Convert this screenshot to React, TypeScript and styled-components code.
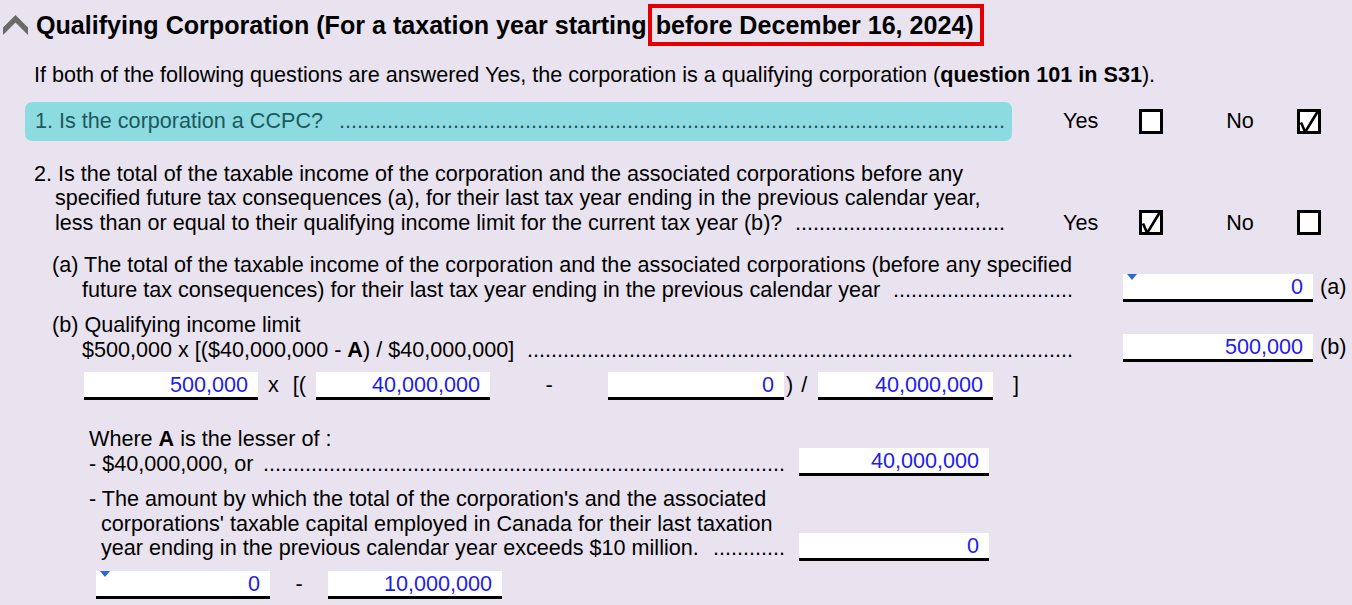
import React from 'react'
import styled, { createGlobalStyle } from 'styled-components'

const GlobalStyle = createGlobalStyle`
	html, body {
		margin: 0;
		padding: 0;
		background: #e9e3ef;
	}
	body {
		font-family: "Liberation Sans", Arial, sans-serif;
		font-size: 21.6px;
		color: #000;
	}
`

const Page = styled.div`
	width: 1352px;
	height: 605px;
	overflow: hidden;
	background: #e9e3ef;
	display: flex;
	flex-direction: column;
`

const TitleRow = styled.div`
	display: flex;
	align-items: center;
	height: 42px;
	margin-top: 4px;
	padding-left: 3px;
	font-size: 25.1px;
	font-weight: bold;
	white-space: nowrap;
`

const TitleText = styled.span`
	margin-left: 8px;
`

const RedBox = styled.span`
	border: 4px solid #e40000;
	padding: 0 6px 0 4px;
	margin-left: 1px;
	line-height: 34px;
`

const Intro = styled.div`
	margin-top: 17px;
	padding-left: 34px;
	line-height: 24.5px;
	white-space: nowrap;
`

const QuestionRow = styled.div<{ $top: number; $align: string }>`
	display: flex;
	align-items: ${p => p.$align};
	margin-top: ${p => p.$top}px;
`

const TealBox = styled.div`
	margin-left: 25px;
	width: 987px;
	height: 39px;
	box-sizing: border-box;
	padding: 0 7px 0 10px;
	background: #8bdbe0;
	border-radius: 7px;
	display: flex;
	align-items: center;
	color: #1b5a5e;
	flex: none;
`

const TextCol = styled.div<{ $w: number; $pl: number; $pr?: number }>`
	width: ${p => p.$w}px;
	padding-left: ${p => p.$pl}px;
	padding-right: ${p => p.$pr ?? 0}px;
	box-sizing: border-box;
	line-height: 24.5px;
	flex: none;
`

const Line = styled.div<{ $indent?: number }>`
	display: flex;
	width: 100%;
	box-sizing: border-box;
	white-space: nowrap;
	padding-left: ${p => p.$indent ?? 0}px;
`

const LeaderBox = styled.span<{ $gap: number }>`
	flex: 1;
	min-width: 0;
	white-space: nowrap;
	text-align: right;
	margin-left: ${p => p.$gap}px;
`

const AnswerGroup = styled.div`
	display: flex;
	align-items: center;
	height: 24.5px;
	margin-left: 51px;
	flex: none;
`

const AnswerLabel = styled.span<{ $mr: number; $ml?: number }>`
	margin-right: ${p => p.$mr}px;
	margin-left: ${p => p.$ml ?? 0}px;
`

const Box = styled.span`
	position: relative;
	display: block;
	width: 24px;
	height: 25px;
	box-sizing: border-box;
	border: 3px solid #000;
	background: #fff;
`

const Mark = styled.svg`
	position: absolute;
	left: -3px;
	top: -3px;
`

const SubRow = styled.div<{ $top: number; $pl?: number }>`
	display: flex;
	align-items: flex-end;
	margin-top: ${p => p.$top}px;
	padding-left: ${p => p.$pl ?? 0}px;
	white-space: nowrap;
`

const Field = styled.div<{ $w: number; $ml?: number }>`
	position: relative;
	width: ${p => p.$w}px;
	margin-left: ${p => p.$ml ?? 0}px;
	height: 28px;
	box-sizing: border-box;
	background: #fff;
	border-bottom: 3px solid #000;
	color: #1c1cf0;
	text-align: right;
	padding-right: 10px;
	line-height: 25px;
	flex: none;
`

const Marker = styled.span`
	position: absolute;
	left: 4px;
	top: 0;
	width: 0;
	height: 0;
	border-left: 5px solid transparent;
	border-right: 5px solid transparent;
	border-top: 6px solid #2a66e0;
`

const FieldLabel = styled.span`
	margin-left: 7px;
	height: 28px;
	line-height: 25px;
`

const Op = styled.span<{ $w: number; $pl?: number; $gap?: number; $center?: boolean }>`
	width: ${p => p.$w}px;
	padding-left: ${p => p.$pl ?? 0}px;
	box-sizing: border-box;
	height: 28px;
	line-height: 25px;
	display: flex;
	gap: ${p => p.$gap ?? 0}px;
	justify-content: ${p => (p.$center ? 'center' : 'flex-start')};
	flex: none;
`

const Leader = ({ count, gap }: { count: number; gap: number }) => (
	<LeaderBox $gap={gap}>{'.'.repeat(count)}</LeaderBox>
)

const Chevron = () => (
	<svg width="25" height="20" viewBox="0 0 25 20">
		<polygon points="0,12.5 12.5,0 25,12.5 25,20 12.5,7.5 0,20" fill="#6b6b6b" />
	</svg>
)

const CheckBox = ({ checked }: { checked?: boolean }) => (
	<Box>
		{checked && (
			<Mark width="24" height="25" viewBox="0 0 24 25">
				<path
					d="M4 13.5 L8.2 23 L21 2"
					fill="none"
					stroke="#000"
					strokeWidth="2.6"
					strokeLinejoin="miter"
				/>
			</Mark>
		)}
	</Box>
)

const Answers = ({ yes }: { yes: boolean }) => (
	<AnswerGroup>
		<AnswerLabel $mr={41}>Yes</AnswerLabel>
		<CheckBox checked={yes} />
		<AnswerLabel $ml={63} $mr={43}>
			No
		</AnswerLabel>
		<CheckBox checked={!yes} />
	</AnswerGroup>
)

export default function App() {
	return (
		<Page>
			<GlobalStyle />
			<TitleRow>
				<Chevron />
				<TitleText>Qualifying Corporation (For a taxation year starting</TitleText>
				<RedBox>before December 16, 2024)</RedBox>
			</TitleRow>

			<Intro>
				If both of the following questions are answered Yes, the corporation is a
				qualifying corporation (<b>question 101 in S31</b>).
			</Intro>

			<QuestionRow $top={14} $align="center">
				<TealBox>
					<Line>
						<span>1. Is the corporation a CCPC?</span>
						<Leader count={111} gap={10} />
					</Line>
				</TealBox>
				<Answers yes={false} />
			</QuestionRow>

			<QuestionRow $top={21} $align="flex-end">
				<TextCol $w={1012} $pl={34} $pr={7}>
					<Line>
						2. Is the total of the taxable income of the corporation and the associated
						corporations before any
					</Line>
					<Line $indent={21}>
						specified future tax consequences (a), for their last tax year ending in the
						previous calendar year,
					</Line>
					<Line $indent={21}>
						<span>
							less than or equal to their qualifying income limit for the current tax year
							(b)?
						</span>
						<Leader count={35} gap={6} />
					</Line>
				</TextCol>
				<Answers yes />
			</QuestionRow>

			<SubRow $top={18}>
				<TextCol $w={1073} $pl={52}>
					<Line>
						(a) The total of the taxable income of the corporation and the associated
						corporations (before any specified
					</Line>
					<Line $indent={30}>
						<span>
							future tax consequences) for their last tax year ending in the previous
							calendar year
						</span>
						<Leader count={30} gap={7} />
					</Line>
				</TextCol>
				<Field $w={190} $ml={50}>
					<Marker />0
				</Field>
				<FieldLabel>(a)</FieldLabel>
			</SubRow>

			<SubRow $top={11}>
				<TextCol $w={1073} $pl={52}>
					<Line>(b) Qualifying income limit</Line>
					<Line $indent={30}>
						<span>
							$500,000 x [($40,000,000 - <b>A</b>) / $40,000,000]
						</span>
						<Leader count={91} gap={7} />
					</Line>
				</TextCol>
				<Field $w={190} $ml={50}>
					500,000
				</Field>
				<FieldLabel>(b)</FieldLabel>
			</SubRow>

			<SubRow $top={10} $pl={84}>
				<Field $w={174}>500,000</Field>
				<Op $w={58} $pl={10} $gap={14}>
					<span>x</span>
					<span>[(</span>
				</Op>
				<Field $w={174}>40,000,000</Field>
				<Op $w={118} $center>
					-
				</Op>
				<Field $w={176}>0</Field>
				<Op $w={34} $pl={2} $gap={8}>
					<span>)</span>
					<span>/</span>
				</Op>
				<Field $w={175}>40,000,000</Field>
				<Op $w={40} $pl={20}>
					]
				</Op>
			</SubRow>

			<SubRow $top={27}>
				<TextCol $w={785} $pl={89}>
					<Line>
						<span>
							Where <b>A</b> is the lesser of :
						</span>
					</Line>
					<Line>
						<span>- $40,000,000, or</span>
						<Leader count={87} gap={6} />
					</Line>
				</TextCol>
				<Field $w={190} $ml={14}>
					40,000,000
				</Field>
			</SubRow>

			<SubRow $top={11}>
				<TextCol $w={785} $pl={89}>
					<Line>- The amount by which the total of the corporation's and the associated</Line>
					<Line $indent={12}>
						corporations' taxable capital employed in Canada for their last taxation
					</Line>
					<Line $indent={12}>
						<span>year ending in the previous calendar year exceeds $10 million.</span>
						<Leader count={12} gap={12} />
					</Line>
				</TextCol>
				<Field $w={190} $ml={14}>
					0
				</Field>
			</SubRow>

			<SubRow $top={10} $pl={96}>
				<Field $w={174}>
					<Marker />0
				</Field>
				<Op $w={58} $center>
					-
				</Op>
				<Field $w={174}>10,000,000</Field>
			</SubRow>
		</Page>
	)
}
